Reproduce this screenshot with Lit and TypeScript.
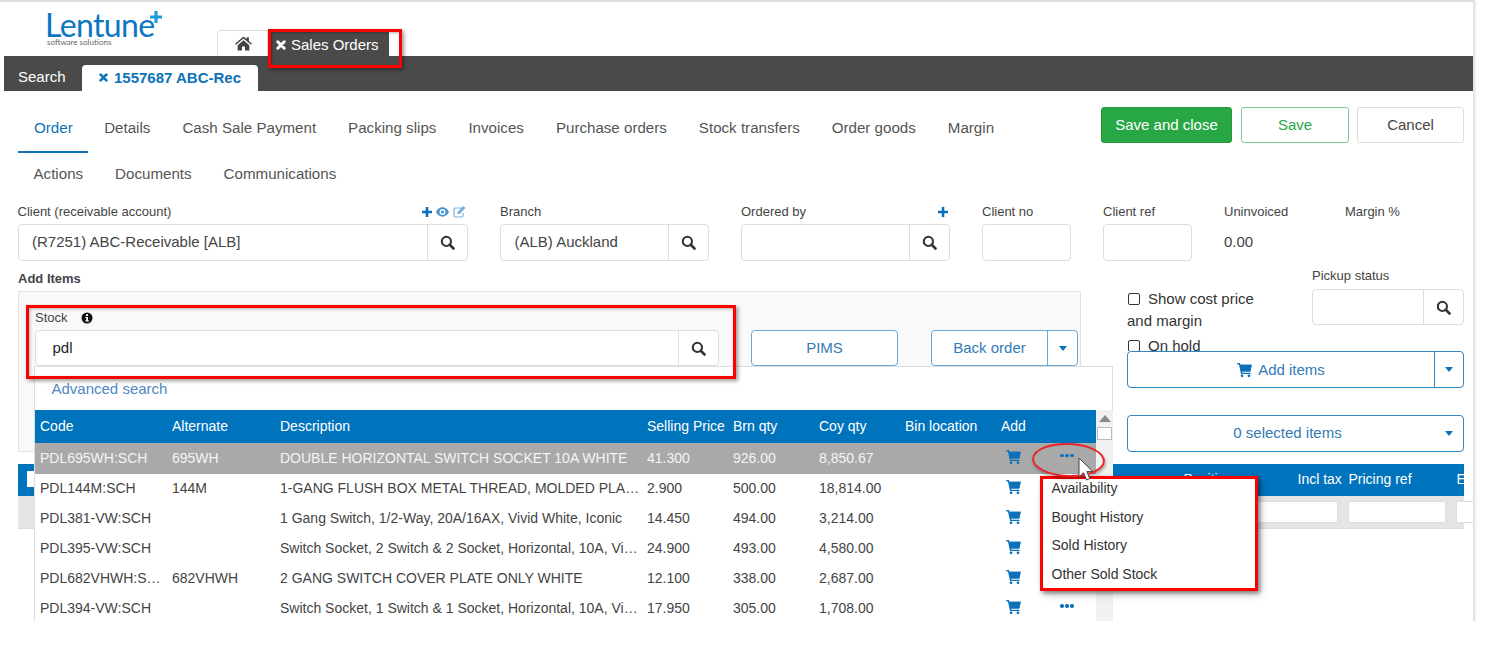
import { LitElement, html, css, svg } from "lit";
import { customElement } from "lit/decorators.js";

const icon = (vb: string, body: unknown, cls = "") =>
  html`<svg class="ico ${cls}" viewBox="${vb}" aria-hidden="true">${body}</svg>`;

const search = () =>
  icon("0 0 16 16", svg`<circle cx="6.8" cy="6.8" r="4.9" fill="none" stroke="currentColor" stroke-width="2.2"/><path d="M10.4 10.4l4 4" stroke="currentColor" stroke-width="2.8" stroke-linecap="round"/>`, "search");
const cart = (cls = "cart") =>
  icon("0 0 16 16", svg`<path d="M0.300 .6h2.900l.5 1.900h12l-1.500 7H5.400l.3 1.300h8.700v1.400H4.300L2.100 2H.3z" fill="currentColor"/><path d="M3.900 2.500h11.800l-1.500 7H5.200z" fill="currentColor"/><circle cx="5.400" cy="14.200" r="1.500" fill="currentColor"/><circle cx="12.800" cy="14.200" r="1.500" fill="currentColor"/>`, cls);
const caret = () => icon("0 0 8 5", svg`<path d="M0 0h8L4 5z" fill="currentColor"/>`, "caret");
const plus = () => icon("0 0 10 10", svg`<path d="M3.700 0h2.600v3.700H10v2.600H6.300V10H3.700V6.300H0V3.700h3.700z" fill="currentColor"/>`, "mini");
const eye = () =>
  icon("0 0 14 10", svg`<path fill-rule="evenodd" d="M7 0c3 0 5.600 2 7 5-1.400 3-4 5-7 5S1.400 8 0 5c1.400-3 4-5 7-5zm0 1.800a3.200 3.200 0 1 0 0 6.400 3.200 3.200 0 0 0 0-6.400z" fill="currentColor"/><circle cx="7" cy="5" r="1.700" fill="currentColor"/>`, "eye");
const edit = () =>
  icon("0 0 13 12", svg`<path d="M9 2H2.500A1.500 1.500 0 0 0 1 3.500v6A1.500 1.500 0 0 0 2.500 11h6A1.500 1.500 0 0 0 10 9.500V7" fill="none" stroke="currentColor" stroke-width="1.200"/><path d="M4.500 6l6-6 2 2-6 6h-2z" fill="currentColor"/>`, "edit");
const times = () => icon("0 0 10 10", svg`<path d="M1.800 1.800l6.400 6.400M8.200 1.800L1.800 8.200" stroke="currentColor" stroke-width="3" stroke-linecap="round"/>`, "times");
const home = () => icon("0 0 18 15", svg`<path d="M9 0l3.300 2.800V1h2.400v3.800L18 7.700l-1 1.200L9 2.100 1 8.900 0 7.700z" fill="currentColor"/><path d="M2.800 9.400L9 4.100l6.200 5.300V15h-4.600v-4.200H7.400V15H2.800z" fill="currentColor"/>`, "home");
const info = () => icon("0 0 12 12", svg`<circle cx="6" cy="6" r="5.500" fill="currentColor"/><rect x="5" y="2.200" width="2" height="1.800" fill="#fff"/><path d="M4.300 5h2.700v3.600h1v1H4.300v-1h1V6h-1z" fill="#fff"/>`, "info");

const rows: string[][] = [
  ["PDL695WH:SCH", "695WH", "DOUBLE HORIZONTAL SWITCH SOCKET 10A WHITE", "41.300", "926.00", "8,850.67"],
  ["PDL144M:SCH", "144M", "1-GANG FLUSH BOX METAL THREAD, MOLDED PLASTIC COVER", "2.900", "500.00", "18,814.00"],
  ["PDL381-VW:SCH", "", "1 Gang Switch, 1/2-Way, 20A/16AX, Vivid White, Iconic", "14.450", "494.00", "3,214.00"],
  ["PDL395-VW:SCH", "", "Switch Socket, 2 Switch & 2 Socket, Horizontal, 10A, Vivid White, Iconic", "24.900", "493.00", "4,580.00"],
  ["PDL682VHWH:SCH", "682VHWH", "2 GANG SWITCH COVER PLATE ONLY WHITE", "12.100", "338.00", "2,687.00"],
  ["PDL394-VW:SCH", "", "Switch Socket, 1 Switch & 1 Socket, Horizontal, 10A, Vivid White, Iconic", "17.950", "305.00", "1,708.00"],
];

@customElement("app-root")
export class AppRoot extends LitElement {
  static styles = css`
    :host { display: block; position: relative; width: 1488px; height: 645px; overflow: hidden; background: #fff;
      font-family: "Liberation Sans", Arial, sans-serif; font-size: 15px; color: #444; }
    * { box-sizing: border-box; }
    .ico { display: block; flex: none; }
    .page { position: relative; width: 1469px; height: 621px; margin-left: 4px; overflow: hidden; background: #fff; }
    .edge { position: absolute; left: 1473px; top: 0; width: 4px; height: 621px; background: linear-gradient(90deg, #dcdcdc, #fff); }
    .topline { position: absolute; left: 0; top: 0; width: 1473px; height: 2px; background: #dedede; }
    .head { height: 56px; display: flex; align-items: flex-end; padding-left: 213px; position: relative; }
    .logo { position: absolute; left: 41px; top: 7px; color: #0b76c1; line-height: 1; }
    .logo-name { font-family: Lato, sans-serif; font-size: 32px; letter-spacing: -0.6px; line-height: 36px; display: block; }
    .logo-sub { font-family: Lato, sans-serif; font-size: 8px; color: #666; display: block; margin: -5px 0 0 2px; }
    .logo-plus { position: absolute; left: 105px; top: 4px; width: 12px; height: 12px; color: #1b9ddb; }
    .logo-plus svg { width: 12px; height: 12px; }
    .tab-home { width: 51px; height: 26px; border: 1px solid #ddd; border-bottom: 0; border-radius: 4px 0 0 0; display: flex; align-items: center; justify-content: center; color: #444; padding-left: 2px; }
    .home { width: 17px; height: 15px; }
    .tab-sales { width: 119px; height: 25px; margin-left: 2px; background: #4a4a4a; color: #fff; display: flex; align-items: center; gap: 5px; padding: 2px 0 0 6px; }
    .times { width: 10px; height: 10px; }
    .bar { height: 35px; background: #4a4a4a; display: flex; align-items: flex-end; padding-left: 14px; color: #fff; }
    .bar-search { width: 64px; height: 26px; line-height: 24px; }
    .bar-tab { width: 176px; height: 26px; background: #fff; border-radius: 4px 4px 0 0; color: #0b72b9; font-weight: 700; display: flex; align-items: center; gap: 6px; padding: 0 0 2px 17px; }
    .bar-tab .times { width: 9px; height: 9px; }
    .main { padding: 16px 9px 0 13.500px; }
    .top { display: flex; justify-content: space-between; height: 96px; }
    .navs { width: 1040px; }
    .nav { display: flex; height: 46px; font-size: 15.130px; }
    .nav + .nav { height: 40px; }
    .nav a { padding: 0 16px; height: 46px; line-height: 42px; color: #555; display: block; }
    .nav + .nav a { height: 40px; line-height: 42px; }
    .nav a.on { color: #0b72b9; border-bottom: 2px solid #0b72b9; padding: 0 15.500px 0 16.500px; }
    .actions { display: flex; gap: 9px; align-items: flex-start; }
    .btn { height: 36px; border-radius: 3px; display: flex; align-items: center; justify-content: center; background: #fff; padding-bottom: 2px; }
    .b-green { width: 131px; background: #28a745; color: #fff; border: 1px solid #23973e; }
    .b-out { width: 108px; color: #28a745; border: 1px solid #7fcb91; }
    .b-cancel { width: 107px; margin-left: -1px; color: #444; border: 1px solid #ddd; }
    .form { display: flex; gap: 32px; }
    .field { display: flex; flex-direction: column; }
    .lbl { height: 21px; display: flex; justify-content: space-between; align-items: center; font-size: 13px; color: #444; padding-bottom: 4px; }
    .lbl-icons { display: flex; align-items: center; gap: 4px; color: #0b72b9; margin-right: 2px; }
    .mini { width: 10px; height: 10px; }
    .eye { width: 13px; height: 10px; color: #4a93cc; }
    .edit { width: 13px; height: 12px; color: #7aaed8; }
    .box { height: 37px; border: 1px solid #ddd; border-radius: 4px; display: flex; background: #fff; overflow: hidden; }
    .box input { flex: 1; min-width: 0; border: 0; outline: 0; background: transparent; padding: 0 0 2px 13.500px; font: inherit; color: #444; }
    .sbtn { width: 40px; border-left: 1px solid #ddd; display: flex; align-items: center; justify-content: center; color: #333; flex: none; }
    .search { width: 15px; height: 15px; }
    .w450 { width: 450.500px; } .w209 { width: 209px; } .w89 { width: 89px; }
    .val { height: 37px; line-height: 35px; color: #444; }
    .lower { display: flex; gap: 46px; }
    .left { width: 1064px; }
    .addh { height: 30px; padding: 8px 0 0 .5px; font-size: 13px; font-weight: 700; line-height: 20px; color: #444; }
    .panel { height: 161px; border: 1px solid #e1e1e1; background: #f9f9f9; padding: 16px 0 0 16.500px; }
    .stock-l { height: 22px; display: flex; align-items: center; gap: 13px; font-size: 13px; color: #444; padding-bottom: 3px; }
    .info { width: 12px; height: 12px; color: #111; }
    .stock-row { display: flex; }
    .stock { position: relative; width: 684px; }
    .stock .box { height: 36px; }
    .stock input { padding-left: 16.500px; color: #222; }
    .b-blue { width: 147px; height: 36px; border: 1px solid #65a9d7; color: #337ab7; border-radius: 4px; background: #fff; display: flex; align-items: center; justify-content: center; padding-bottom: 2px; }
    .pims { margin-left: 32px; }
    .split { margin-left: 33px; justify-content: flex-start; overflow: hidden; padding-bottom: 0; }
    .split .txt { flex: 1; text-align: center; padding-bottom: 2px; }
    .split .dd { width: 30px; height: 100%; border-left: 1px solid #65a9d7; display: flex; align-items: center; justify-content: center; color: #0b72b9; }
    .caret { width: 8px; height: 5px; }
    .right { width: 337px; }
    .opts { height: 90px; position: relative; display: flex; justify-content: space-between; overflow: hidden; padding-top: 27px; }
    .checks { width: 135px; line-height: 22px; color: #333; }
    .chk { appearance: none; -webkit-appearance: none; width: 12px; height: 12px; margin: 0 8px 0 1px; border: 1.500px solid #333; border-radius: 2px; background: #fff; vertical-align: -1px; }
    .check-gap { display: block; margin-top: 3px; }
    .pickup { width: 152px; margin-top: -27px; }
    .pickup .lbl { padding: 1px 0 0; justify-content: flex-start; height: 28px; }
    .pickup .box { height: 36px; }
    .b-add { width: 337px; height: 37px; border: 1px solid #2f86c4; border-radius: 4px; color: #337ab7; display: flex; align-items: stretch; background: #fff; overflow: hidden; }
    .b-add .txt { flex: 1; display: flex; align-items: center; justify-content: center; gap: 6px; }
    .b-add .cart2 { width: 15px; height: 16px; color: #0b72b9; }
    .b-add .dd { width: 29px; border-left: 1px solid #2f86c4; display: flex; align-items: center; justify-content: center; color: #0b72b9; }
    .b-sel { margin-top: 27px; }
    .b-sel .txt { padding: 0 0 2px 13px; }
    .b-sel .dd { border-left: 0; }
    .tbl { margin-top: 12px; width: 1446.500px; height: 65px; background: #e5e5e5; border-bottom: 1px solid #ddd; }
    .t-head { height: 32px; background: #0073bd; color: #fff; display: flex; font-size: 14px; align-items: center; padding-bottom: 2px; }
    .t-all { width: 10px; height: 16px; margin-left: 9px; background: #fff; flex: none; }
    .t-pos { margin-left: 1147px; width: 114px; flex: none; }
    .t-tax { width: 51px; flex: none; }
    .t-ref { width: 108px; flex: none; }
    .t-filter { height: 33px; display: flex; padding-top: 5px; gap: 10px; padding-left: 1212px; }
    .t-in { height: 22px; background: #fff; border: 1px solid #ddd; width: 108px; flex: none; }
    .t-in.n2 { width: 98px; }
    .t-in.n3 { width: 20px; }
    .pop { position: absolute; left: -1px; top: 36px; width: 1079px; height: 300px; background: #fff; border: 1px solid #ddd; border-bottom: 0; z-index: 3; color: #444; font-size: 14px; padding-top: 12px; }
    .adv { height: 31px; padding-left: 16.500px; color: #4f86c2; line-height: 20px; font-size: 15px; display: block; }
    .grid { width: 1061px; }
    .tr { display: grid; grid-template-columns: 132px 108px 367px 86px 86px 86px 96px 51px 49px; height: 30px; align-items: center; padding-bottom: 2px; }
    .tr > span { padding: 0 1.500px 0 5px; white-space: nowrap; overflow: hidden; text-overflow: ellipsis; min-width: 0; }
    .tr.h { height: 33px; background: #0073bd; color: #fff; }
    .tr.h > span { overflow: visible; }
    .tr.sel { background: #a9a9a9; color: #f4f4f4; height: 31px; }
    .cart { width: 15px; height: 16px; color: #0b72b9; margin-bottom: 2px; }
    .tr .c-cart { padding-left: 10px; overflow: visible; }
    .dots { display: flex; gap: 1.500px; margin-left: 8px; margin-bottom: 4px; }
    .dots i { width: 3.600px; height: 3.600px; border-radius: 50%; background: #0b72b9; display: block; }
    .sb { position: absolute; left: 1061px; top: 43px; width: 17px; bottom: 0; background: #f1f1f1; }
    .sb-up { width: 0; height: 0; border: 6px solid transparent; border-top: 0; border-bottom: 7px solid #8a8a8a; margin: 5px auto 0; }
    .sb-th { width: 15px; height: 13px; margin: 5px auto 0; background: #fff; border: 1px solid #bbb; }
    .menu { position: absolute; left: 1041px; top: 477px; width: 216px; height: 113px; background: #fff; padding: 0 0 0 10.500px; font-size: 14px; color: #333; z-index: 5; box-shadow: 3px 4px 8px rgba(0,0,0,.25); }
    .menu div { height: 28.500px; line-height: 22px; }
    .red { position: absolute; border: 3px solid #f00; z-index: 6; box-shadow: 2px 2px 4px rgba(0,0,0,.4), inset 1px 1px 3px rgba(0,0,0,.3); pointer-events: none; }
    .r1 { left: 268px; top: 29px; width: 134px; height: 39px; }
    .r2 { left: 26px; top: 305px; width: 710px; height: 74px; }
    .r3 { left: 1040px; top: 476px; width: 218px; height: 115px; box-shadow: 2px 2px 4px rgba(0,0,0,.4); }
    .ellipse { position: absolute; left: 1032px; top: 443px; width: 73px; height: 34px; border: 2px solid #e8232a; border-radius: 50%; z-index: 6; transform: rotate(2deg); box-shadow: 1px 2px 3px rgba(0,0,0,.3); }
    .cursor { position: absolute; left: 1078px; top: 457px; width: 15px; height: 25px; z-index: 7; }
  `;

  private sbox(value = "") {
    return html`<div class="box"><input .value=${value} aria-label="search" /><span class="sbtn">${search()}</span></div>`;
  }

  render() {
    const top = ["Order", "Details", "Cash Sale Payment", "Packing slips", "Invoices", "Purchase orders", "Stock transfers", "Order goods", "Margin"];
    return html`
      <div class="page">
        <header class="head">
          <div class="logo">
            <span class="logo-name">Lentune</span>
            <span class="logo-sub">software solutions</span>
            <span class="logo-plus">${plus()}</span>
          </div>
          <span class="tab-home">${home()}</span>
          <span class="tab-sales">${times()}Sales Orders</span>
        </header>
        <div class="bar">
          <span class="bar-search">Search</span>
          <span class="bar-tab">${times()}1557687 ABC-Rec</span>
        </div>
        <main class="main">
          <div class="top">
            <div class="navs">
              <nav class="nav">
                ${top.map((t, i) => html`<a class=${i === 0 ? "on" : ""}>${t}</a>`)}
              </nav>
              <nav class="nav">
                <a>Actions</a><a>Documents</a><a>Communications</a>
              </nav>
            </div>
            <div class="actions">
              <span class="btn b-green">Save and close</span>
              <span class="btn b-out">Save</span>
              <span class="btn b-cancel">Cancel</span>
            </div>
          </div>
          <div class="form">
            <div class="field w450">
              <div class="lbl"><span>Client (receivable account)</span><span class="lbl-icons">${plus()}${eye()}${edit()}</span></div>
              ${this.sbox("(R7251) ABC-Receivable [ALB]")}
            </div>
            <div class="field w209"><div class="lbl">Branch</div>${this.sbox("(ALB) Auckland")}</div>
            <div class="field w209">
              <div class="lbl"><span>Ordered by</span><span class="lbl-icons">${plus()}</span></div>
              ${this.sbox()}
            </div>
            <div class="field w89"><div class="lbl">Client no</div><div class="box"></div></div>
            <div class="field w89"><div class="lbl">Client ref</div><div class="box"></div></div>
            <div class="field w89"><div class="lbl">Uninvoiced</div><div class="val">0.00</div></div>
            <div class="field w89"><div class="lbl">Margin %</div></div>
          </div>
          <div class="lower">
            <div class="left">
              <div class="addh">Add Items</div>
              <div class="panel">
                <div class="stock-l">Stock ${info()}</div>
                <div class="stock-row">
                  <div class="stock">
                    ${this.sbox("pdl")}
                    <div class="pop">
                      <a class="adv">Advanced search</a>
                      <div class="grid">
                        <div class="tr h">
                          ${["Code", "Alternate", "Description", "Selling Price", "Brn qty", "Coy qty", "Bin location", "Add", ""].map((c) => html`<span>${c}</span>`)}
                        </div>
                        ${rows.map(
                          (r, i) => html`<div class="tr ${i === 0 ? "sel" : ""}">
                            ${r.map((c) => html`<span>${c}</span>`)}
                            <span></span>
                            <span class="c-cart">${cart()}</span>
                            <span>${i === 0 || i === 5 ? html`<div class="dots"><i></i><i></i><i></i></div>` : ""}</span>
                          </div>`
                        )}
                      </div>
                      <div class="sb"><div class="sb-up"></div><div class="sb-th"></div></div>
                    </div>
                  </div>
                  <span class="b-blue pims">PIMS</span>
                  <span class="b-blue split"><span class="txt">Back order</span><span class="dd">${caret()}</span></span>
                </div>
              </div>
            </div>
            <div class="right">
              <div class="opts">
                <div class="checks">
                  <label><input class="chk" type="checkbox" />Show cost price and margin</label>
                  <label class="check-gap"><input class="chk" type="checkbox" />On hold</label>
                </div>
                <div class="pickup"><div class="lbl">Pickup status</div>${this.sbox()}</div>
              </div>
              <div class="b-add"><span class="txt">${cart("cart2")}Add items</span><span class="dd">${caret()}</span></div>
              <div class="b-add b-sel"><span class="txt">0 selected items</span><span class="dd">${caret()}</span></div>
            </div>
          </div>
          <div class="tbl">
            <div class="t-head">
              <span class="t-all"></span>
              <span class="t-pos">Position</span>
              <span class="t-tax">Incl tax</span>
              <span class="t-ref">Pricing ref</span>
              <span>E</span>
            </div>
            <div class="t-filter"><span class="t-in"></span><span class="t-in n2"></span><span class="t-in n3"></span></div>
          </div>
        </main>
      </div>
      <div class="edge"></div>
      <div class="topline"></div>
      <div class="menu"><div>Availability</div><div>Bought History</div><div>Sold History</div><div>Other Sold Stock</div></div>
      <div class="red r1"></div>
      <div class="red r2"></div>
      <div class="red r3"></div>
      <div class="ellipse"></div>
      <svg class="cursor" viewBox="0 0 15 25" aria-hidden="true"><path d="M1 1v19l4.500-4.300 3 7.300 3.300-1.400-3-7h6z" fill="#fff" stroke="#444" stroke-width="1"/></svg>
    `;
  }
}
